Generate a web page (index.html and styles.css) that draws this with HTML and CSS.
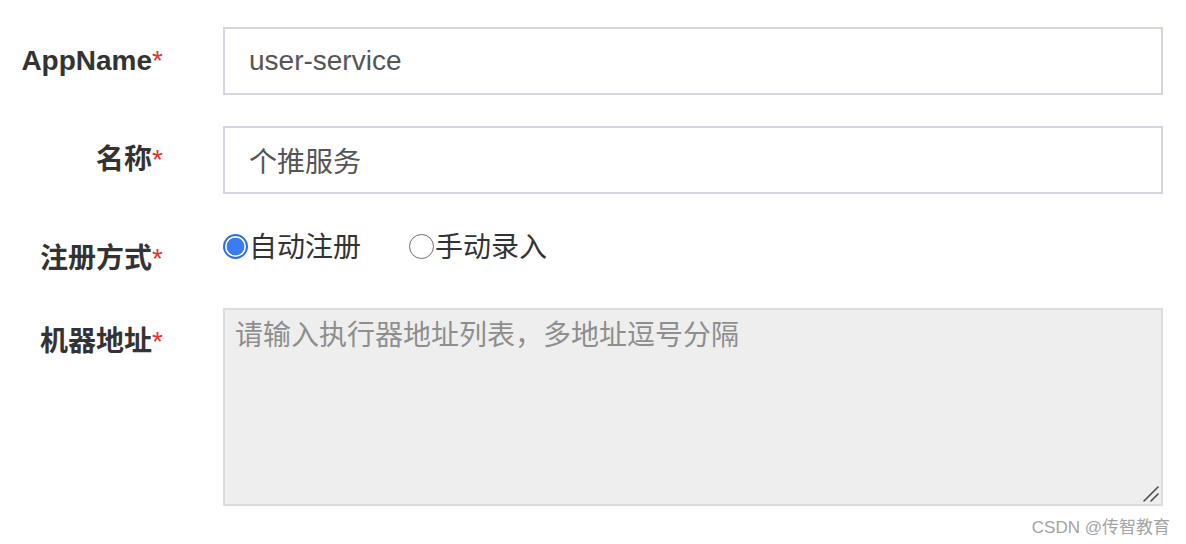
FILE: index.html
```html
<!DOCTYPE html>
<html lang="zh-CN">
<head>
<meta charset="utf-8">
<title>执行器表单</title>
<link rel="stylesheet" href="styles.css">
</head>
<body>
<form class="form">
  <div class="row">
    <label class="label">AppName<span class="req">*</span></label>
    <input class="field" type="text" value="user-service">
  </div>
  <div class="row">
    <label class="label">名称<span class="req">*</span></label>
    <input class="field" type="text" value="个推服务">
  </div>
  <div class="row row-radio">
    <label class="label">注册方式<span class="req">*</span></label>
    <div class="radios">
      <label class="radio"><input type="radio" name="reg" checked><span>自动注册</span></label>
      <label class="radio"><input type="radio" name="reg"><span>手动录入</span></label>
    </div>
  </div>
  <div class="row">
    <label class="label">机器地址<span class="req">*</span></label>
    <div class="area-wrap">
      <textarea class="area" placeholder="请输入执行器地址列表，多地址逗号分隔" readonly></textarea>
      <svg class="grip" width="18" height="18" viewBox="0 0 18 18" aria-hidden="true">
        <line x1="2" y1="16" x2="16" y2="2" stroke="#4a4a4a" stroke-width="1.6" stroke-linecap="round"/>
        <line x1="9" y1="16" x2="16" y2="9" stroke="#4a4a4a" stroke-width="1.6" stroke-linecap="round"/>
      </svg>
    </div>
  </div>
</form>
<div class="watermark">CSDN @传智教育</div>
</body>
</html>
```

FILE: styles.css
```css
html, body {
  margin: 0;
  padding: 0;
  background: #fff;
}
body {
  font-family: "Liberation Sans", "Noto Sans CJK SC", sans-serif;
  width: 1186px;
  height: 544px;
  overflow: hidden;
}
.form {
  display: flex;
  flex-direction: column;
  gap: 31px;
  padding-top: 27px;
}
.row {
  display: flex;
  align-items: flex-start;
  gap: 60px;
}
.row-radio {
  height: 52px;
}
.label {
  width: 163px;
  flex: none;
  text-align: right;
  font-size: 28px;
  line-height: 32px;
  font-weight: bold;
  color: #333;
  padding-top: 18px;
}
.req {
  color: #e5322d;
  font-weight: normal;
}
.field {
  box-sizing: border-box;
  width: 940px;
  height: 68px;
  margin: 0;
  padding: 0 24px;
  border: 2px solid #d3d6de;
  border-radius: 0;
  outline: none;
  font-family: inherit;
  font-size: 28px;
  color: #555;
  background: #fff;
}
.radios {
  display: flex;
  gap: 48px;
  padding-top: 7px;
}
.radio {
  display: flex;
  align-items: center;
  font-size: 28px;
  line-height: 32px;
  color: #333;
}
.radio input {
  appearance: none;
  -webkit-appearance: none;
  box-sizing: border-box;
  width: 25px;
  height: 25px;
  margin: -3px 1px 0 0;
  border: 1.5px solid #6f6f6f;
  border-radius: 50%;
  background: #fff;
}
.radio input:checked {
  border: 2px solid #2e6fe8;
  background: radial-gradient(circle, #3b7cf2 0 8.5px, #fff 9.2px);
}
.area-wrap {
  position: relative;
  width: 940px;
  height: 198px;
}
.area {
  display: block;
  box-sizing: border-box;
  width: 940px;
  height: 198px;
  margin: 0;
  padding: 10px 10px;
  border: 2px solid #dcdcdc;
  border-radius: 0;
  outline: none;
  background: #eeeeee;
  font-family: inherit;
  font-size: 28px;
  line-height: 32px;
  color: #555;
  resize: none;
}
.area::placeholder {
  color: #8e8e8e;
}
.grip {
  position: absolute;
  right: 3px;
  bottom: 3px;
}
.watermark {
  text-align: right;
  padding-right: 16px;
  margin-top: 10px;
  font-size: 17px;
  line-height: 24px;
  color: #a3a3a3;
}
```
